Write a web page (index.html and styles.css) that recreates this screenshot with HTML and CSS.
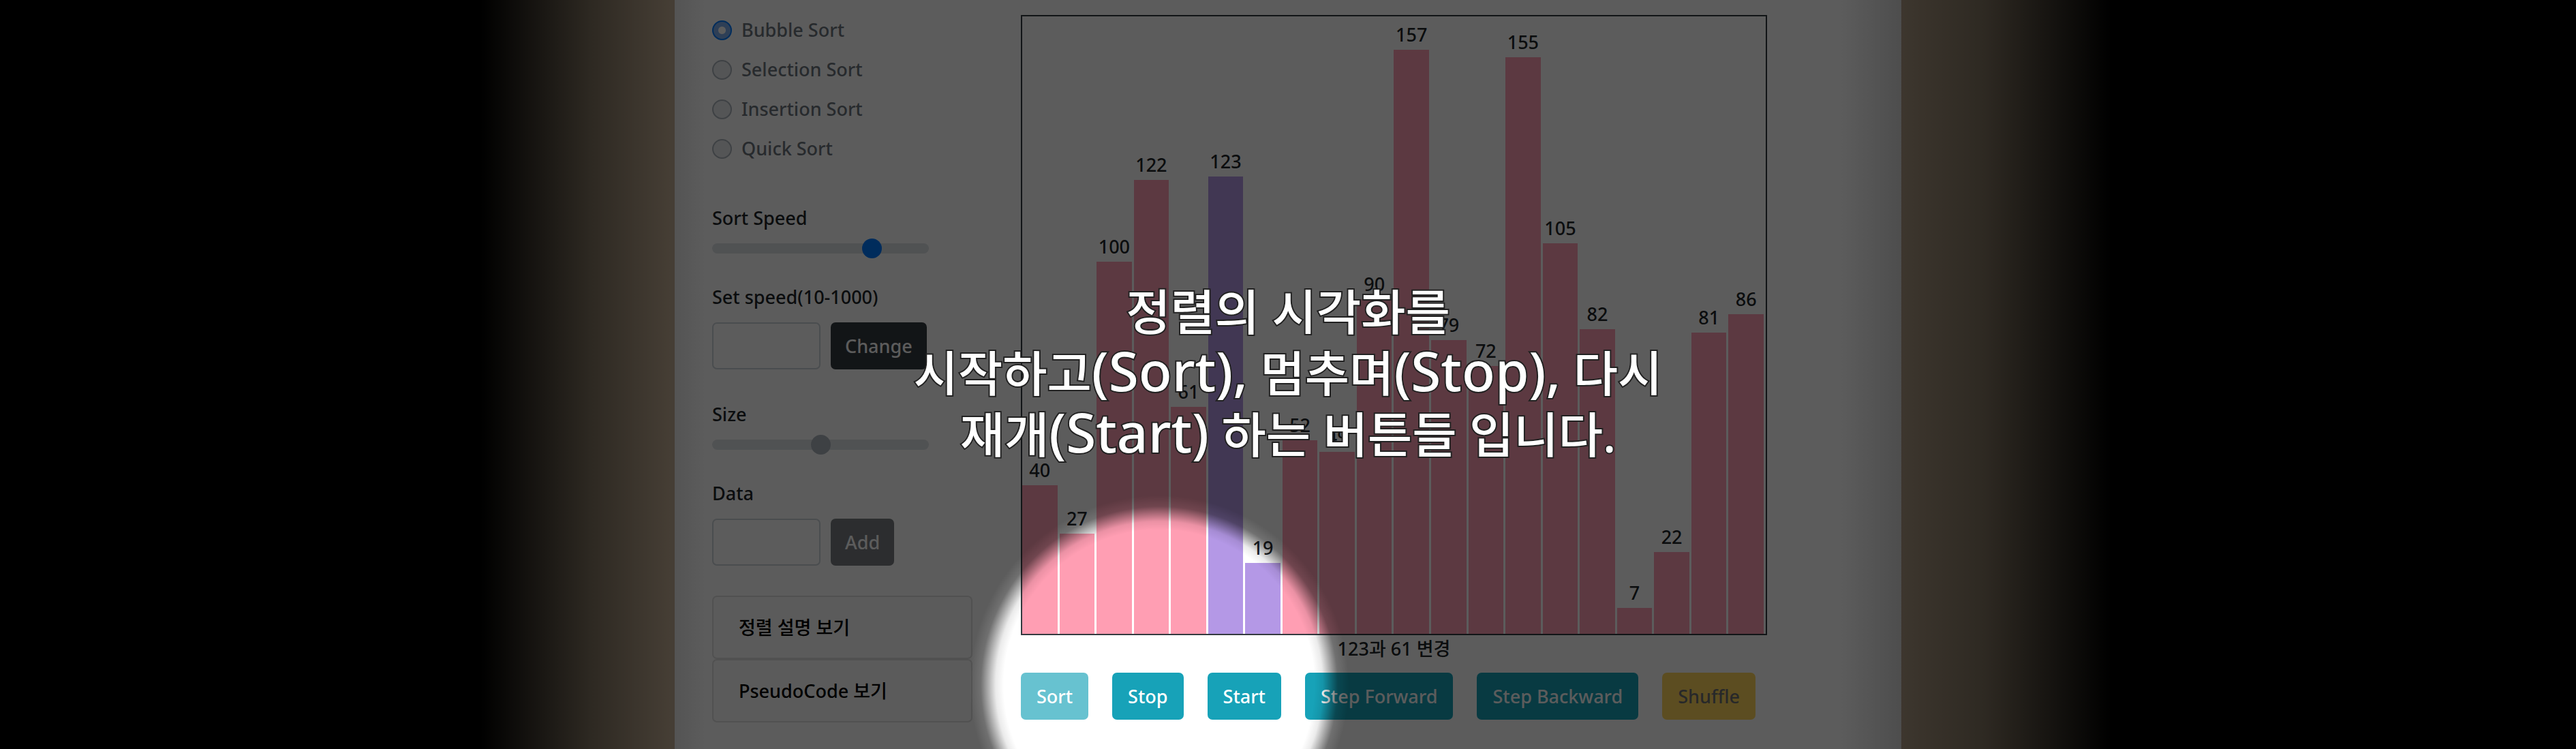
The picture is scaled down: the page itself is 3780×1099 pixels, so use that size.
FILE: index.html
```html
<!DOCTYPE html>
<html lang="ko">
<head>
<meta charset="utf-8">
<title>Sort Visualizer</title>
<link rel="stylesheet" href="styles.css">
</head>
<body>
<main class="page">
  <div class="panel">
    <form class="controls">
      <fieldset class="algorithms">
        <label class="choice"><input type="radio" name="sort" checked disabled>Bubble Sort</label>
        <label class="choice"><input type="radio" name="sort" disabled>Selection Sort</label>
        <label class="choice"><input type="radio" name="sort" disabled>Insertion Sort</label>
        <label class="choice"><input type="radio" name="sort" disabled>Quick Sort</label>
      </fieldset>
      <div class="field">
        <label for="speed">Sort Speed</label>
        <input class="slider" id="speed" type="range" min="0" max="100" value="76">
      </div>
      <div class="field field-entry">
        <label for="speed-value">Set speed(10-1000)</label>
        <div class="entry">
          <input class="box" id="speed-value" type="text">
          <button class="btn btn-dark" type="button">Change</button>
        </div>
      </div>
      <div class="field">
        <label for="size">Size</label>
        <input class="slider" id="size" type="range" min="0" max="100" value="50" disabled>
      </div>
      <div class="field field-entry">
        <label for="data">Data</label>
        <div class="entry">
          <input class="box" id="data" type="text">
          <button class="btn btn-dark btn-off" type="button" disabled>Add</button>
        </div>
      </div>
      <div class="accordion">
        <button class="fold" type="button">정렬 설명 보기</button>
        <button class="fold" type="button">PseudoCode 보기</button>
      </div>
    </form>
    <section class="stage">
      <div class="chart">
        <div class="column"><span>40</span><div class="bar" style="--v:40"></div></div>
        <div class="column"><span>27</span><div class="bar" style="--v:27"></div></div>
        <div class="column"><span>100</span><div class="bar" style="--v:100"></div></div>
        <div class="column"><span>122</span><div class="bar" style="--v:122"></div></div>
        <div class="column"><span>61</span><div class="bar" style="--v:61"></div></div>
        <div class="column"><span>123</span><div class="bar active" style="--v:123"></div></div>
        <div class="column"><span>19</span><div class="bar active" style="--v:19"></div></div>
        <div class="column"><span>52</span><div class="bar" style="--v:52"></div></div>
        <div class="column"><span>49</span><div class="bar" style="--v:49"></div></div>
        <div class="column"><span>90</span><div class="bar" style="--v:90"></div></div>
        <div class="column"><span>157</span><div class="bar" style="--v:157"></div></div>
        <div class="column"><span>79</span><div class="bar" style="--v:79"></div></div>
        <div class="column"><span>72</span><div class="bar" style="--v:72"></div></div>
        <div class="column"><span>155</span><div class="bar" style="--v:155"></div></div>
        <div class="column"><span>105</span><div class="bar" style="--v:105"></div></div>
        <div class="column"><span>82</span><div class="bar" style="--v:82"></div></div>
        <div class="column"><span>7</span><div class="bar" style="--v:7"></div></div>
        <div class="column"><span>22</span><div class="bar" style="--v:22"></div></div>
        <div class="column"><span>81</span><div class="bar" style="--v:81"></div></div>
        <div class="column"><span>86</span><div class="bar" style="--v:86"></div></div>
      </div>
      <p class="status">123과 61 변경</p>
      <div class="actions">
        <button class="btn btn-info btn-off" type="button" disabled>Sort</button>
        <button class="btn btn-info" type="button">Stop</button>
        <button class="btn btn-info" type="button">Start</button>
        <button class="btn btn-info" type="button">Step Forward</button>
        <button class="btn btn-info" type="button">Step Backward</button>
        <button class="btn btn-warning btn-off" type="button" disabled>Shuffle</button>
      </div>
    </section>
  </div>
</main>
<div class="tour">
  <p class="tour-text">정렬의 시각화를<br>시작하고<span class="latin">(Sort),</span> 멈추며<span class="latin">(Stop),</span> 다시<br>재개<span class="latin">(Start)</span> 하는 버튼들 입니다.</p>
</div>
</body>
</html>
```
FILE: styles.css
```css
* {
  box-sizing: border-box;
}

body {
  margin: 0;
  background: #000;
  color: #212529;
  font: 500 27px/44px "Noto Sans", "Noto Sans CJK KR", sans-serif;
}

.page {
  min-height: 100vh;
  overflow: hidden;
  background: linear-gradient(to right, #000 18.6%, #807360 23%, #c0ab92 26%, #c0ab92 72%, #807360 77%, #000 82%);
}

.panel {
  display: flex;
  gap: 71px;
  width: 1800px;
  min-height: 100vh;
  margin: 0 auto;
  padding: 22px 55px 0;
  background: linear-gradient(to right, #e8e8e8, #fff 45px, #fff calc(100% - 90px), #d6d6d6);
}

.controls {
  width: 382px;
}

.algorithms {
  display: flex;
  flex-direction: column;
  gap: 14px;
  margin: 0 0 58px;
  padding: 0;
  border: 0;
}

.choice {
  display: flex;
  align-items: center;
  gap: 14px;
  color: #6c757d;
}

.choice input {
  appearance: none;
  width: 29px;
  height: 29px;
  margin: 0;
  border: 2px solid #adb5bd;
  border-radius: 50%;
  background: #e9ecef;
}

.choice input:checked {
  border-color: #007bff;
  background: radial-gradient(circle, #fff 5px, #80b0ee 6px);
}

.field {
  display: flex;
  flex-direction: column;
  gap: 4px;
  margin-bottom: 32px;
}

.field-entry {
  gap: 15px;
  margin-bottom: 44px;
}

.slider {
  appearance: none;
  width: 318px;
  height: 36px;
  margin: 0;
  background: none;
}

.slider::-webkit-slider-runnable-track {
  height: 15px;
  border-radius: 8px;
  background: #dee2e6;
}

.slider::-webkit-slider-thumb {
  appearance: none;
  width: 29px;
  height: 29px;
  margin-top: -7px;
  border-radius: 50%;
  background: #007bff;
}

.slider:disabled::-webkit-slider-thumb {
  background: #adb5bd;
}

.entry {
  display: flex;
  gap: 15px;
}

.box {
  width: 159px;
  height: 69px;
  border: 2px solid #ced4da;
  border-radius: 7px;
  background: #fff;
}

.btn {
  height: 69px;
  padding: 0 23px;
  border: 0;
  border-radius: 7px;
  color: #fff;
  font: inherit;
  white-space: nowrap;
}

.btn-dark {
  padding: 0 21px;
  background: #343a40;
}

.btn-info {
  background: #17a2b8;
}

.btn-warning {
  background: #ffc107;
  color: #212529;
}

.btn-off {
  opacity: .65;
}

.accordion {
  display: flex;
  flex-direction: column;
}

.fold {
  height: 93px;
  padding: 0 37px;
  border: 2px solid #dfdfdf;
  border-radius: 7px;
  background: #fbfbfb;
  color: #000;
  font: inherit;
  text-align: left;
}

.stage {
  width: 1095px;
}

.chart {
  display: grid;
  grid-template-columns: repeat(20, minmax(0, 1fr));
  gap: 3px;
  height: 910px;
  padding-right: 3px;
  border: 2px solid #343a40;
}

.column {
  display: flex;
  flex-direction: column;
  justify-content: flex-end;
  text-align: center;
}

.bar {
  flex: none;
  height: calc(var(--v) * 0.6023%);
  background: #ff9eb3;
}

.bar.active {
  background: #b498e6;
}

.status {
  margin: 0 0 15px;
  line-height: 40px;
  text-align: center;
}

.actions {
  display: flex;
  gap: 35px;
}

.tour {
  position: fixed;
  inset: 0;
  display: flex;
  align-items: center;
  justify-content: center;
  padding-bottom: 6px;
  background: radial-gradient(circle at 45% 1005px, rgba(0, 0, 0, 0) 228px, rgba(0, 0, 0, .08) 240px, rgba(0, 0, 0, .56) 262px, rgba(0, 0, 0, .64) 278px);
}

.tour-text {
  margin: 0;
  color: #fff;
  font-size: 71px;
  line-height: 90px;
  text-align: center;
  -webkit-text-stroke: 4px #222;
  paint-order: stroke fill;
}

.latin {
  font-size: 80px;
  line-height: 1;
}
```
